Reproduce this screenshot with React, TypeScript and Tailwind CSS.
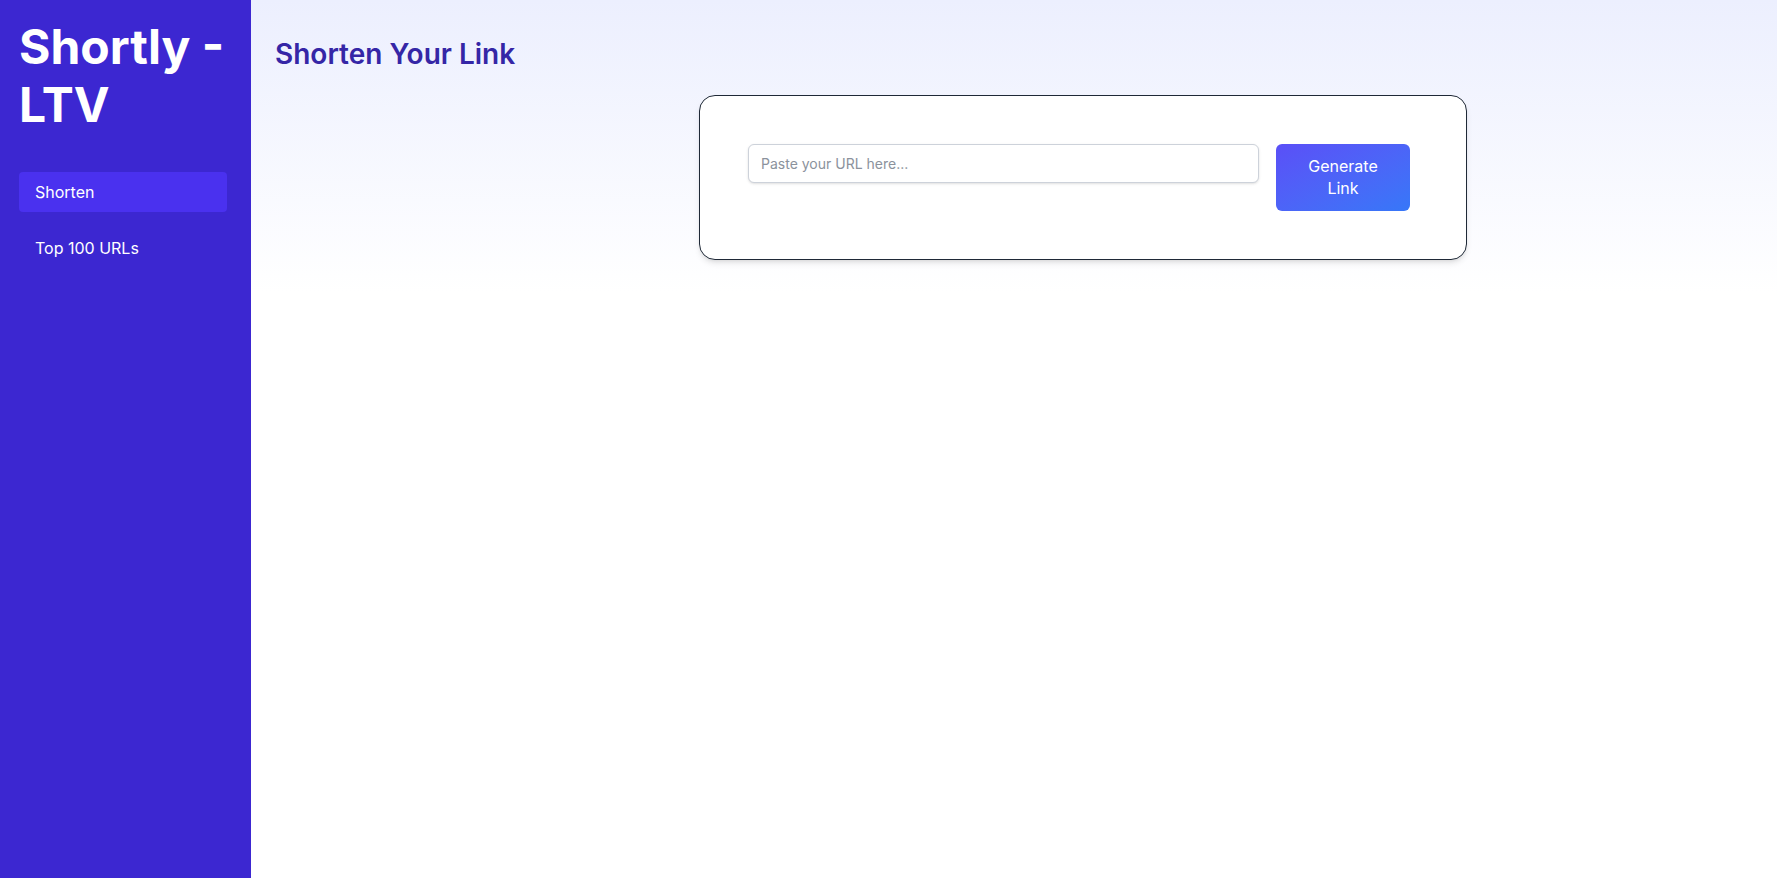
import React, { useState } from 'react';

const navItems = ['Shorten', 'Top 100 URLs'];

const App: React.FC = () => {
  const [active, setActive] = useState('Shorten');
  const [url, setUrl] = useState('');

  return (
    <div className="flex min-h-[878px] w-full font-['Inter',sans-serif] antialiased">
      <aside className="w-[251px] shrink-0 bg-[#3c27d1] pl-[19px] pr-[24px] pt-[18px] text-white">
        <h1 className="text-[48px] font-bold leading-[58px]">Shortly - LTV</h1>
        <nav className="mt-[38px] flex flex-col gap-4">
          {navItems.map((item) => (
            <button
              key={item}
              onClick={() => setActive(item)}
              className={`h-10 w-full rounded px-4 text-left text-base ${
                active === item ? 'bg-[#4a31ef]' : 'bg-transparent'
              }`}
            >
              {item}
            </button>
          ))}
        </nav>
      </aside>

      <main className="flex-1 bg-white">
        <section className="bg-gradient-to-b from-[#eceffe] to-white px-6 pb-8 pt-[37px]">
          <h2 className="text-[28px] font-semibold leading-[34px] text-[#3526a6]">Shorten Your Link</h2>
          <div className="mt-[24px] ml-[424px] w-[768px] rounded-2xl border border-[#1f2937] bg-white p-12 shadow-md">
            <form className="flex items-start gap-[17px]" onSubmit={(e) => e.preventDefault()}>
              <input
                type="text"
                value={url}
                onChange={(e) => setUrl(e.target.value)}
                placeholder="Paste your URL here..."
                className="h-[39px] w-[511px] rounded-md border border-[#cdd2da] bg-white px-3 text-sm text-gray-700 shadow-sm placeholder:text-[#8b929c] focus:outline-none"
              />
              <button
                type="submit"
                className="h-[67px] w-[134px] rounded-md bg-gradient-to-br from-[#5a4ff7] to-[#3677f8] px-6 pb-[2px] text-base leading-[22px] text-white"
              >
                Generate Link
              </button>
            </form>
          </div>
        </section>
      </main>
    </div>
  );
};

export default App;
